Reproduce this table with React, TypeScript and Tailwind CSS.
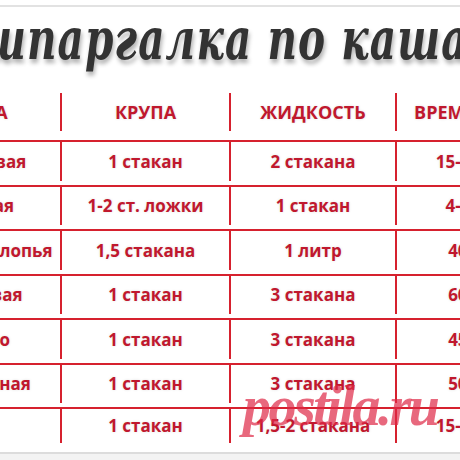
const rows = [
  { name: "Гречневая", grain: "1 стакан", liquid: "2 стакана", time: "15-20 мин" },
  { name: "Манная", grain: "1-2 ст. ложки", liquid: "1 стакан", time: "4-5 мин" },
  { name: "Овсяные хлопья", grain: "1,5 стакана", liquid: "1 литр", time: "40 мин" },
  { name: "Перловая", grain: "1 стакан", liquid: "3 стакана", time: "60 мин" },
  { name: "Пшено", grain: "1 стакан", liquid: "3 стакана", time: "45 мин" },
  { name: "Кукурузная", grain: "1 стакан", liquid: "3 стакана", time: "50 мин" },
  { name: "Рис", grain: "1 стакан", liquid: "1,5-2 стакана", time: "15-20 мин" },
];

const cell = "flex items-center justify-center whitespace-nowrap";
const line = "border-l-2 border-[#d6212e]";

export default function App() {
  return (
    <div className="relative w-[460px] h-[460px] overflow-hidden bg-white font-['Open_Sans',sans-serif]">
      {/* top edge */}
      <div className="mt-[5px] h-[2px] bg-[#e2e2e2]" />

      {/* title */}
      <div className="h-[86px]">
        <div className="ml-[-17px] origin-left scale-x-[0.7] whitespace-nowrap font-['DejaVu_Serif',serif] text-[58px] leading-[64px] tracking-[1.5px] font-bold italic text-[#333333] [text-shadow:2px_4px_5px_rgba(0,0,0,0.3)]">
          шпаргалка по кашам
        </div>
      </div>

      {/* table */}
      <div className="ml-[-101px] w-[662px] text-[#c0182e] font-bold [text-shadow:0_0_3px_rgba(0,0,0,0.12)]">
        <div className="grid grid-cols-[161px_169px_166px_166px] h-[47px] text-[18px] pb-[9px]">
          <div className={cell}>КАША</div>
          <div className={`${cell} ${line}`}>КРУПА</div>
          <div className={`${cell} ${line}`}>ЖИДКОСТЬ</div>
          <div className={`${cell} ${line}`}>ВРЕМЯ ВАРКИ</div>
        </div>
        {rows.map((r, i) => (
          <div
            key={r.name}
            className={`grid grid-cols-[161px_169px_166px_166px] border-t-2 border-[#d6212e] text-[17px] ${
              i === rows.length - 1 ? "h-[36px]" : "h-[44.5px] pb-[4px]"
            }`}
          >
            <div className={cell}>{r.name}</div>
            <div className={`${cell} ${line}`}>{r.grain}</div>
            <div className={`${cell} ${line}`}>{r.liquid}</div>
            <div className={`${cell} ${line}`}>{r.time}</div>
          </div>
        ))}
      </div>

      {/* bottom edge */}
      <div className="mt-[9px] h-[2px] bg-[#dcdcdc]" />
      <div className="h-[6px] bg-[#f3f3f3]" />

      {/* watermark */}
      <div className="absolute left-[243px] top-[378px] whitespace-nowrap font-['Liberation_Serif',serif] text-[56px] leading-[56px] font-bold italic tracking-[-2.5px] text-[rgba(222,40,70,0.7)]">
        postila.ru
      </div>
    </div>
  );
}
